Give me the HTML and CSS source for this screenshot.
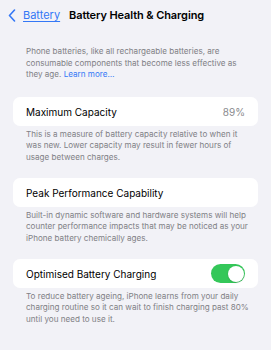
FILE: index.html
```html
<!DOCTYPE html>
<html>
<head>
<meta charset="utf-8">
<link rel="stylesheet" href="styles.css">
</head>
<body>
<div class="page">
  <header class="nav">
    <a class="back">
      <svg class="chev" width="8" height="13" viewBox="0 0 8 13"><path d="M6.5 1 L1.5 6.5 L6.5 12" fill="none" stroke="#3478f6" stroke-width="1.6" stroke-linecap="round" stroke-linejoin="round"/></svg>
      <span class="back-label">Battery</span>
    </a>
    <h1 class="title">Battery Health &amp; Charging</h1>
  </header>

  <p class="intro">Phone batteries, like all rechargeable batteries, are consumable components that become less effective as they age. <span class="link">Learn more…</span></p>

  <div class="card">
    <span class="label">Maximum Capacity</span>
    <span class="value">89%</span>
  </div>
  <p class="footer">This is a measure of battery capacity relative to when it was new. Lower capacity may result in fewer hours of usage between charges.</p>

  <div class="card">
    <span class="label">Peak Performance Capability</span>
  </div>
  <p class="footer">Built-in dynamic software and hardware systems will help counter performance impacts that may be noticed as your iPhone battery chemically ages.</p>

  <div class="card">
    <span class="label">Optimised Battery Charging</span>
    <span class="toggle"><span class="knob"></span></span>
  </div>
  <p class="footer">To reduce battery ageing, iPhone learns from your daily charging routine so it can wait to finish charging past 80% until you need to use it.</p>
</div>
</body>
</html>
```
FILE: styles.css
```css
html, body {
  margin: 0;
  padding: 0;
  background: #f2f2f7;
}
body {
  font-family: Inter, "Noto Sans", sans-serif;
  color: #000;
  width: 271px;
  height: 350px;
  overflow: hidden;
}
.page {
  display: flex;
  flex-direction: column;
}
.nav {
  display: flex;
  align-items: center;
  height: 30px;
  padding-left: 8px;
}
.back {
  display: flex;
  align-items: center;
  color: #3478f6;
}
.chev {
  display: block;
}
.back-label {
  margin-left: 7px;
  font-size: 11px;
  text-decoration: underline;
  text-underline-offset: 2px;
}
.title {
  margin: 0 0 0 9px;
  font-size: 11px;
  font-weight: 600;
  letter-spacing: -0.1px;
}
.intro {
  margin: 16.25px 20px 0 26px;
  font-size: 8.1px;
  line-height: 11.5px;
  color: #808085;
}
.link {
  color: #3478f6;
}
.card {
  display: flex;
  align-items: center;
  justify-content: space-between;
  margin: 16.25px 13px 0 13px;
  height: 29px;
  padding: 0 13px;
  background: #fff;
  border-radius: 7px;
}
.label {
  font-size: 10px;
}
.value {
  font-size: 10px;
  color: #8a8a8e;
}
.footer {
  margin: 2.5px 20px 0 26px;
  font-size: 8.1px;
  line-height: 11.7px;
  color: #808085;
}
.footer + .card {
  margin-top: 14.4px;
}
.toggle {
  display: flex;
  justify-content: flex-end;
  align-items: center;
  width: 34px;
  height: 19px;
  padding: 0 1.5px;
  box-sizing: border-box;
  background: #34c759;
  border-radius: 10px;
}
.knob {
  width: 16px;
  height: 16px;
  border-radius: 50%;
  background: #fff;
  box-shadow: 0 0.5px 1.5px rgba(0,0,0,0.2);
}
```
